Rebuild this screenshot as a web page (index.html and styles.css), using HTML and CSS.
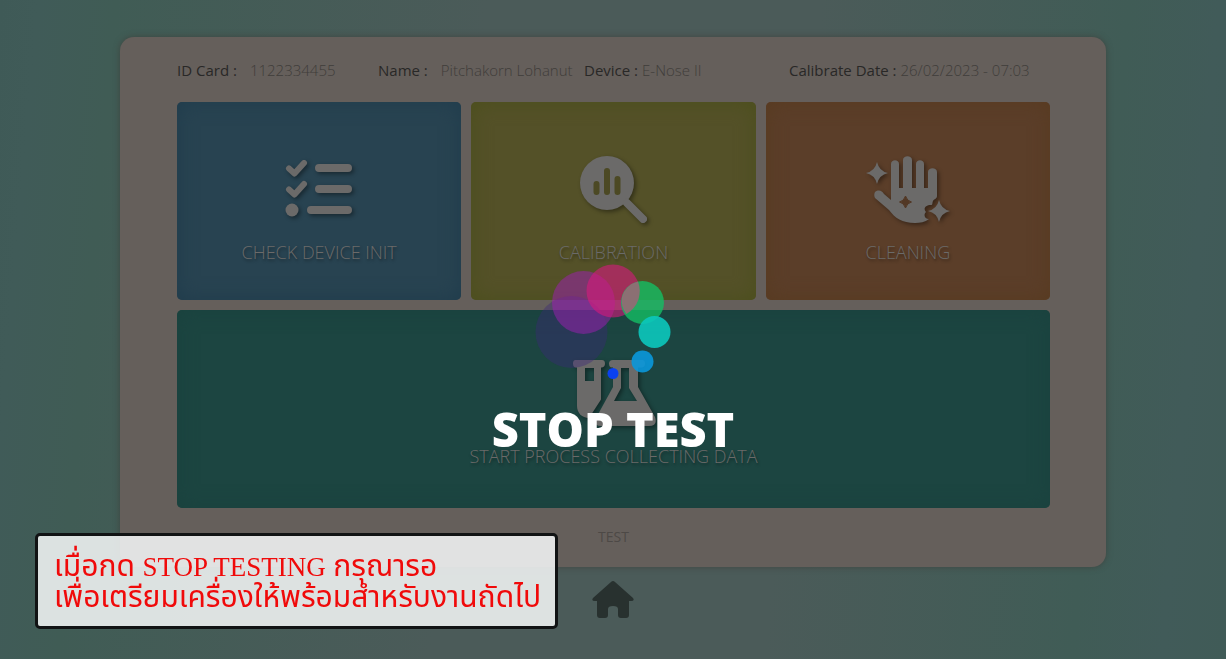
FILE: index.html
```html
<!DOCTYPE html>
<html lang="en">
<head>
<meta charset="utf-8">
<meta name="viewport" content="width=device-width, initial-scale=1">
<title>E-Nose II</title>
<link rel="stylesheet" href="styles.css">
</head>
<body>
<div class="page">
  <main class="card">
    <dl class="info">
      <div class="info-item wide-gap"><dt>ID Card :</dt><dd>1122334455</dd></div>
      <div class="info-item wide-gap"><dt>Name :</dt><dd>Pitchakorn Lohanut</dd></div>
      <div class="info-item"><dt>Device :</dt><dd>E-Nose II</dd></div>
      <div class="info-item"><dt>Calibrate Date :</dt><dd>26/02/2023 - 07:03</dd></div>
    </dl>
    <div class="tiles">
      <button class="tile tile-blue" type="button">
        <svg class="icon" viewBox="0 0 84 84" aria-hidden="true">
          <g fill="none" stroke="currentColor" stroke-linecap="round" stroke-linejoin="round">
            <path stroke-width="6" d="M12 20.500l5.500 5L27 15M12 41.500l5.500 5L27 36"/>
            <path stroke-width="8" d="M42 20h29M42 41h29M34 62h37"/>
          </g>
          <circle cx="15" cy="62" r="6.500" fill="currentColor"/>
        </svg>
        <span>CHECK DEVICE INIT</span>
      </button>
      <button class="tile tile-olive" type="button">
        <svg class="icon" viewBox="0 0 84 84" aria-hidden="true">
          <circle cx="36" cy="35" r="27" fill="currentColor"/>
          <path d="M56 55l16 16" stroke="currentColor" stroke-width="8" stroke-linecap="round"/>
          <path class="cut" d="M25.500 36v8M36 23v21M46.500 31v13" stroke-width="6" stroke-linecap="round"/>
        </svg>
        <span>CALIBRATION</span>
      </button>
      <button class="tile tile-orange" type="button">
        <svg class="icon" viewBox="0 0 84 84" aria-hidden="true">
          <path fill="currentColor" d="M9 44c4-3 7-1 9 2l7 6V16c0-5 8-5 8 0v24h4V12c0-5 9-5 9 0v28h4V16c0-5 8-5 8 0v24h4V24c0-5 9-5 9 0v24c0 3-3 3-4 5s0 4-2 4c-6 0-8 4-5 7-3 3-1 7 3 7-4 3-9 4-14 4-13 0-20-5-26-13L9 50c-1-2-1-4 0-6z"/>
          <path class="cut" d="M39.500 48q1.500 5 6 6-4.500 1-6 6-1.500-5-6-6 4.500-1 6-6z" stroke-width="1"/>
          <path fill="currentColor" d="M11 14q2 9 11 11-9 2-11 11Q9 27 0 25q9-2 11-11zM73 52q2 9 11 11-9 2-11 11-2-9-11-11 9-2 11-11z"/>
        </svg>
        <span>CLEANING</span>
      </button>
      <button class="tile tile-green" type="button">
        <svg class="icon" viewBox="0 0 84 84" aria-hidden="true">
          <path fill="currentColor" fill-rule="evenodd" d="M4 8h26q3 0 3 3.500t-3 4h-1v32L17 66C10 66 5 61 5 54V15.500H4q-3 0-3-4T4 8zM13 16v13h9V16z"/>
          <path fill="currentColor" fill-rule="evenodd" d="M42 8h28q3 0 3 3.500t-3 4h-4V35l17 30q3 9-6 9H29q-8 0-5-8l17-31V15.500h-1q-3 0-3-4T42 8zM49 16v20l-7 13h23l-8-13V16z"/>
        </svg>
        <span>START PROCESS COLLECTING DATA</span>
      </button>
    </div>
    <p class="status">TEST</p>
  </main>
  <a class="home" href="#" aria-label="Home">
    <svg viewBox="0 0 42 38" aria-hidden="true"><path fill="currentColor" d="M19 1q2-2 4 0l18 16q2 3-2 3h-2v14q0 3-3 3h-5q-3 0-3-3v-6q0-3-5-3t-5 3v6q0 3-3 3H8q-3 0-3-3V20H3q-4 0-2-3z"/></svg>
  </a>
</div>

<div class="overlay" role="status">
  <svg class="loader" viewBox="0 0 160 118" aria-hidden="true">
    <circle cx="38.500" cy="69" r="36" fill="#3c2878" fill-opacity=".4"/>
    <circle cx="50.500" cy="39.500" r="31.500" fill="#a01eb4" fill-opacity=".5"/>
    <circle cx="80" cy="28" r="26.500" fill="#d7197d" fill-opacity=".6"/>
    <circle cx="109.500" cy="39.500" r="21.500" fill="#14be64" fill-opacity=".8"/>
    <path d="M89 34a21.500 21.500 0 0 1 16-15.500 26.500 26.500 0 0 1-11.500 32.500 21.500 21.500 0 0 1-4.500-17z" fill="#8b7073"/>
    <circle cx="121.500" cy="69" r="16" fill="#0cc8bc" fill-opacity=".9"/>
    <circle cx="109.500" cy="98.500" r="11" fill="#0a98dc" fill-opacity=".9"/>
    <circle cx="80" cy="110.500" r="5.500" fill="#0a41f0"/>
  </svg>
  <strong class="overlay-title">STOP TEST</strong>
</div>

<aside class="note" lang="th">เมื่อกด <span class="note-latin">STOP TESTING</span> กรุณารอ<br>เพื่อเตรียมเครื่องให้พร้อมสำหรับงานถัดไป</aside>
</body>
</html>
```
FILE: styles.css
```css
* { box-sizing: border-box; }

body {
  margin: 0;
  min-height: 100vh;
  font-family: "Open Sans", "Noto Sans", sans-serif;
  background: linear-gradient(95deg, #3f5a57 0%, #405b58 3%, #405c55 9%, #4b5b59 38%, #4b5b59 64%, #405c56 88%, #415b59 95%, #405b57 100%);
}

.page {
  display: flex;
  flex-direction: column;
  align-items: center;
  padding: 37px 120px 0;
}

.card {
  width: 100%;
  padding: 22px 56px 19px 57px;
  border-radius: 14px;
  background: #655f5b;
  box-shadow: 0 0 6px rgba(60, 55, 50, 0.6);
}

.info {
  display: grid;
  grid-template-columns: 201fr 206fr 205fr 261fr;
  margin: 0;
  font-size: 15px;
  line-height: 22px;
  white-space: nowrap;
}

.info-item { display: flex; gap: 4px; }
.wide-gap { gap: 13px; }
.info dt { color: #292827; font-weight: 500; }
.info dd { margin: 0; color: #403d3a; font-weight: 300; }

.tiles {
  display: grid;
  grid-template-columns: repeat(3, 1fr);
  gap: 10px;
  margin-top: 21px;
}

.tile {
  display: flex;
  flex-direction: column;
  align-items: center;
  gap: 8px;
  height: 198px;
  padding: 46px 0 0;
  border: 0;
  border-radius: 5px;
  color: #6b6a69;
  font: 350 18px/24px "Open Sans", "Noto Sans", sans-serif;
  background: var(--tile);
  box-shadow: inset 0 0 20px var(--edge);
  text-shadow: 1px 2px 3px rgba(0, 0, 0, 0.4);
}

.tile-blue { --tile: #284351; --edge: #203c4c; }
.tile-olive { --tile: #545128; --edge: #4b4f1c; }
.tile-orange { --tile: #5b3e29; --edge: #583b20; }
.tile-green { --tile: #1c4541; --edge: #1a423e; grid-column: 1 / -1; padding-top: 42px; }

.icon {
  width: 84px;
  height: 84px;
  filter: drop-shadow(2px 2px 2px rgba(0, 0, 0, 0.4));
}

.cut { fill: var(--tile); stroke: var(--tile); filter: brightness(0.9); }

.status {
  margin: 17px 0 0;
  color: #4d4946;
  font-size: 14px;
  font-weight: 400;
  line-height: 23px;
  text-align: center;
}

.home { display: block; margin-top: 14px; color: #28312f; }
.home svg { display: block; width: 42px; height: 38px; }

.overlay {
  position: fixed;
  inset: 0;
  display: flex;
  flex-direction: column;
  align-items: center;
  justify-content: center;
  gap: 16px;
  padding-top: 64px;
  pointer-events: none;
}

.loader { width: 160px; height: 118px; }

.overlay-title {
  color: #fff;
  font-size: 47px;
  font-weight: 800;
  line-height: 64px;
}

.note {
  position: fixed;
  bottom: 30px;
  left: 35px;
  padding: 14px 14px 14px 16px;
  border: 3px solid #111314;
  border-radius: 5px;
  background: rgba(244, 246, 246, 0.87);
  color: #f00a0a;
  font-family: "Liberation Serif", "Noto Sans Thai", serif;
  font-size: 30px;
  line-height: 31px;
  white-space: nowrap;
}

.note-latin { font-size: 27px; line-height: 1; }
```
